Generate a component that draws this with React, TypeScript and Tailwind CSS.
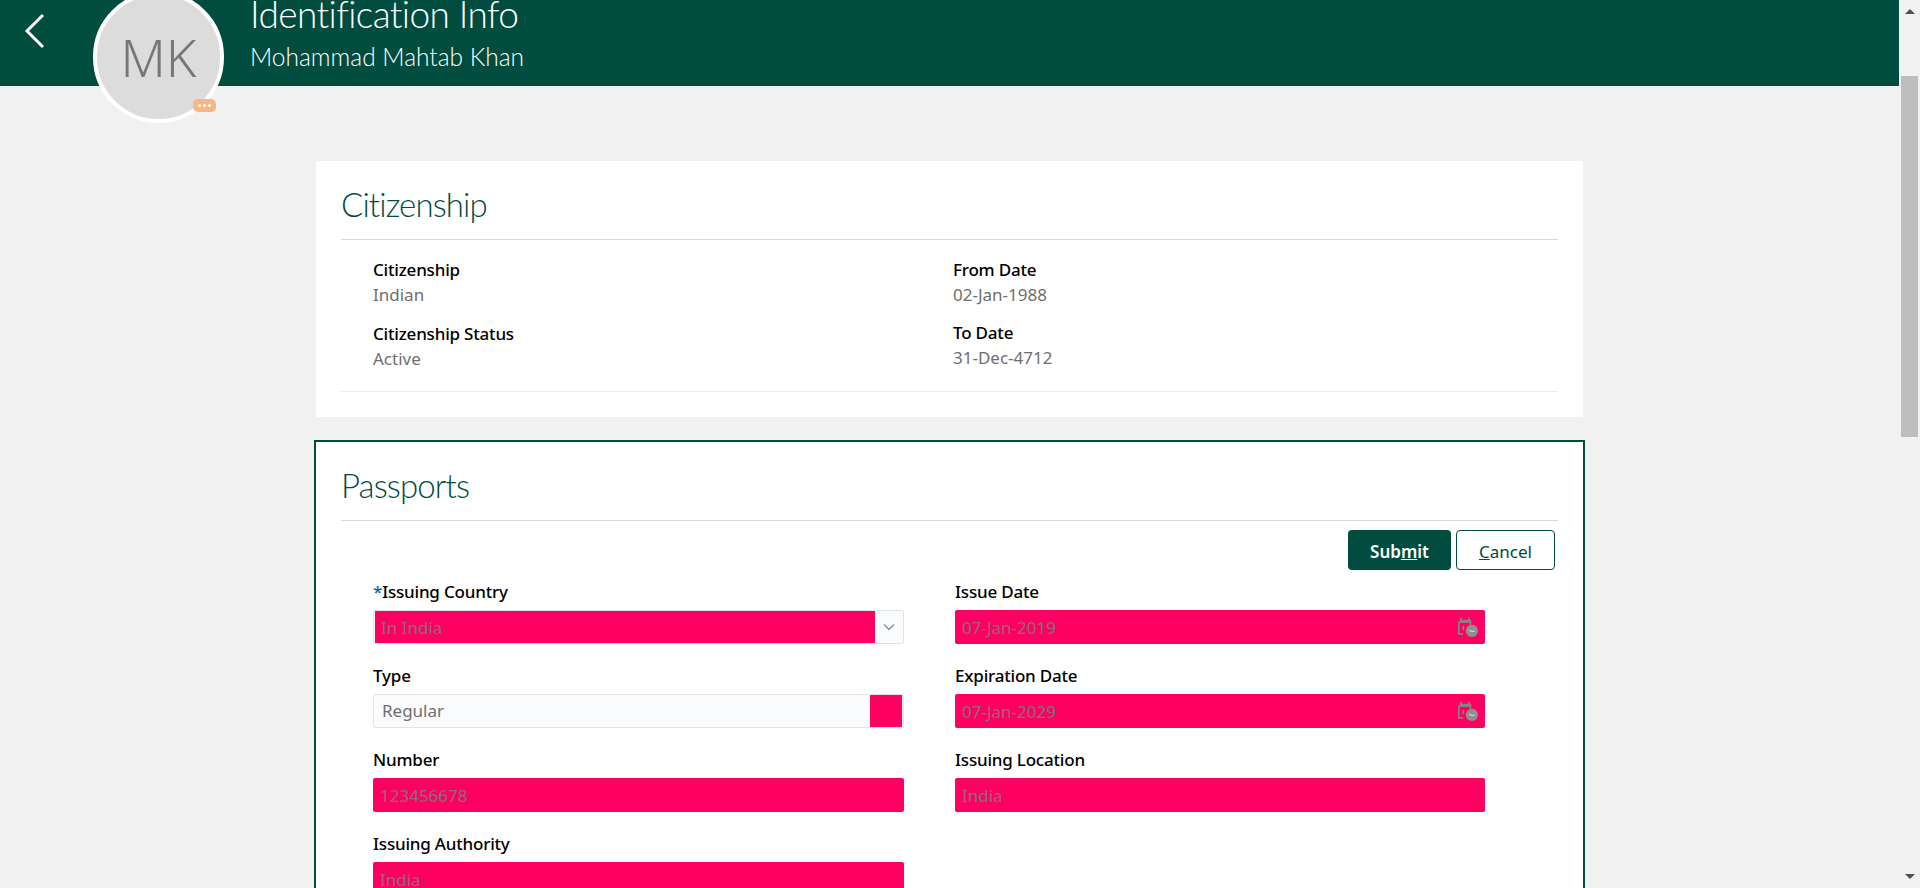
import React from 'react';

const lightFont = "font-['Lato','Noto_Sans',sans-serif] font-light";

function CalendarIcon() {
  return (
    <svg width="20" height="20" viewBox="3 2 18 18" className="shrink-0">
      <path d="M5 2.500h1.500v2H12v-2h1.500v2h1.500v5h-1.500v-2h-9v9h3v1.500h-4.500v-12h1.500z" fill="#8c7f86" />
      <rect x="7" y="10" width="1.500" height="4" fill="#8c7f86" />
      <circle cx="15.500" cy="14.500" r="5.500" fill="#8f8f8f" />
      <path d="M13 14l3 1 2-.5" stroke="#d8d8d8" strokeWidth="1" fill="none" />
    </svg>
  );
}

function Label({ children }: { children: React.ReactNode }) {
  return <div className="text-[17px] leading-[24px] font-medium tracking-[-0.2px] text-black">{children}</div>;
}

function PinkField({ value, icon }: { value: string; icon?: boolean }) {
  return (
    <div className="h-[34px] w-full bg-[#ff0062] rounded-[2px] flex items-center justify-between pl-[7px] pr-[7px] text-[17px] text-[#8f6a79]">
      <span className="pt-[1px]">{value}</span>
      {icon && <CalendarIcon />}
    </div>
  );
}

function ReadOnlyItem({ label, value }: { label: string; value: string }) {
  return (
    <div>
      <Label>{label}</Label>
      <div className="text-[17px] leading-[25px] text-[#6f6f6f]">{value}</div>
    </div>
  );
}

export default function App() {
  return (
    <div className="h-[888px] overflow-hidden flex bg-[#f1f1f1] font-['Noto_Sans','Open_Sans',sans-serif]">
      <div className="flex-1 min-w-0">
        {/* Header */}
        <header className="h-[86px] bg-[#004d40] text-white flex relative">
          <div className="w-[70px] flex justify-center pt-[13px]">
            <svg width="22" height="36" viewBox="0 0 22 36" fill="none" stroke="white" strokeWidth="3">
              <path d="M19 2L3 18l16 16" />
            </svg>
          </div>
          <div className={`pl-[180px] -mt-[10px] ${lightFont}`}>
            <div className="text-[37px] leading-[48px] tracking-[-0.6px]">Identification Info</div>
            <div className="text-[24.5px] leading-[30px] mt-[4px]">Mohammad Mahtab Khan</div>
          </div>
          {/* Avatar */}
          <div className="absolute left-[93px] top-[-9px] w-[131px] h-[132px]">
            <div className="w-full h-full rounded-full bg-[#dcdcdc] border-[4px] border-white flex items-center justify-center text-[52px] font-light text-[#777777]">
              MK
            </div>
            <div className="absolute right-[8px] bottom-[11px] w-[23px] h-[13px] rounded-[5px] bg-[#fbb583] flex items-center justify-center gap-[2px]">
              <span className="w-[3px] h-[3px] rounded-full bg-white" />
              <span className="w-[3px] h-[3px] rounded-full bg-white" />
              <span className="w-[3px] h-[3px] rounded-full bg-white" />
            </div>
          </div>
        </header>

        <main className="pt-[75px] pl-[316px] w-[1584px]">
          {/* Citizenship */}
          <section className="w-[1267px] h-[256px] bg-white px-[25px]">
            <h2 className={`h-[79px] pt-[21px] text-[33px] leading-[44px] tracking-[-0.9px] text-[#004d40] border-b border-[#d9d9d9] ${lightFont}`}>Citizenship</h2>
            <div className="h-[152px] border-b border-[#ebebeb] pt-[18px] pl-[32px] grid grid-cols-[580px_1fr]">
              <div className="flex flex-col gap-[15px]">
                <ReadOnlyItem label="Citizenship" value="Indian" />
                <ReadOnlyItem label="Citizenship Status" value="Active" />
              </div>
              <div className="flex flex-col gap-[14px]">
                <ReadOnlyItem label="From Date" value="02-Jan-1988" />
                <ReadOnlyItem label="To Date" value="31-Dec-4712" />
              </div>
            </div>
          </section>

          {/* Passports */}
          <section className="mt-[23px] w-[1271px] -ml-[2px] h-[600px] bg-white border-2 border-[#004d40] pl-[25px] pr-[25px]">
            <h2 className={`h-[79px] pt-[21px] text-[33px] leading-[44px] tracking-[-0.9px] text-[#004d40] border-b border-[#d9d9d9] ${lightFont}`}>Passports</h2>
            <div className="flex justify-end gap-[5px] pt-[9px] pr-[3px]">
              <button className="w-[103px] h-[40px] pt-[3px] rounded-[4px] bg-[#004d40] text-white text-[17px] font-semibold">
                Sub<span className="underline">m</span>it
              </button>
              <button className="w-[99px] h-[40px] pt-[3px] rounded-[4px] bg-white border border-[#004d40] text-[#004d40] text-[17px]">
                <span className="underline">C</span>ancel
              </button>
            </div>
            <div className="pl-[32px] grid grid-cols-[582px_530px] pt-[10px]">
              <div className="flex flex-col">
                <div className="h-[84px]">
                  <Label><span className="text-[#0b5fa5]">*</span>Issuing Country</Label>
                  <div className="mt-[6px] h-[34px] w-[531px] bg-[#fbfcfd] border border-[#e2e4e6] rounded-[2px] flex pl-[1px]">
                    <div className="flex-1 bg-[#ff0062] pl-[6px] flex items-center text-[17px] text-[#8f6a79]"><span className="pt-[1px]">In India</span></div>
                    <div className="w-[28px] flex items-center justify-center">
                      <svg width="14" height="14" viewBox="0 0 14 14" fill="none" stroke="#8a9299" strokeWidth="1.500"><path d="M2 4.500l5 5 5-5" /></svg>
                    </div>
                  </div>
                </div>
                <div className="h-[84px]">
                  <Label>Type</Label>
                  <div className="mt-[6px] h-[34px] w-[531px] bg-[#fbfcfd] border border-[#e2e4e6] rounded-[2px] flex text-[17px] text-[#6f6f6f]">
                    <div className="flex-1 pl-[8px] flex items-center">Regular</div>
                    <div className="w-[32px] bg-[#ff0062] mr-[1px]" />
                  </div>
                </div>
                <div className="h-[84px]">
                  <Label>Number</Label>
                  <div className="mt-[6px] w-[531px]"><PinkField value="123456678" /></div>
                </div>
                <div className="h-[84px]">
                  <Label>Issuing Authority</Label>
                  <div className="mt-[6px] w-[531px]"><PinkField value="India" /></div>
                </div>
              </div>
              <div className="flex flex-col">
                <div className="h-[84px]">
                  <Label>Issue Date</Label>
                  <div className="mt-[6px]"><PinkField value="07-Jan-2019" icon /></div>
                </div>
                <div className="h-[84px]">
                  <Label>Expiration Date</Label>
                  <div className="mt-[6px]"><PinkField value="07-Jan-2029" icon /></div>
                </div>
                <div className="h-[84px]">
                  <Label>Issuing Location</Label>
                  <div className="mt-[6px]"><PinkField value="India" /></div>
                </div>
              </div>
            </div>
          </section>
        </main>
      </div>

      {/* Scrollbar */}
      <aside className="w-[21px] h-full flex flex-col items-center bg-[#f1f1f1] relative">
        <div className="mt-[9px] w-0 h-0 border-x-[5px] border-x-transparent border-b-[5px] border-b-[#505050]" />
        <div className="mt-[62px] w-[17px] h-[361px] bg-[#bdbdbd]" />
        <div className="mt-auto mb-[9px] w-0 h-0 border-x-[5px] border-x-transparent border-t-[5px] border-t-[#505050]" />
      </aside>
    </div>
  );
}
